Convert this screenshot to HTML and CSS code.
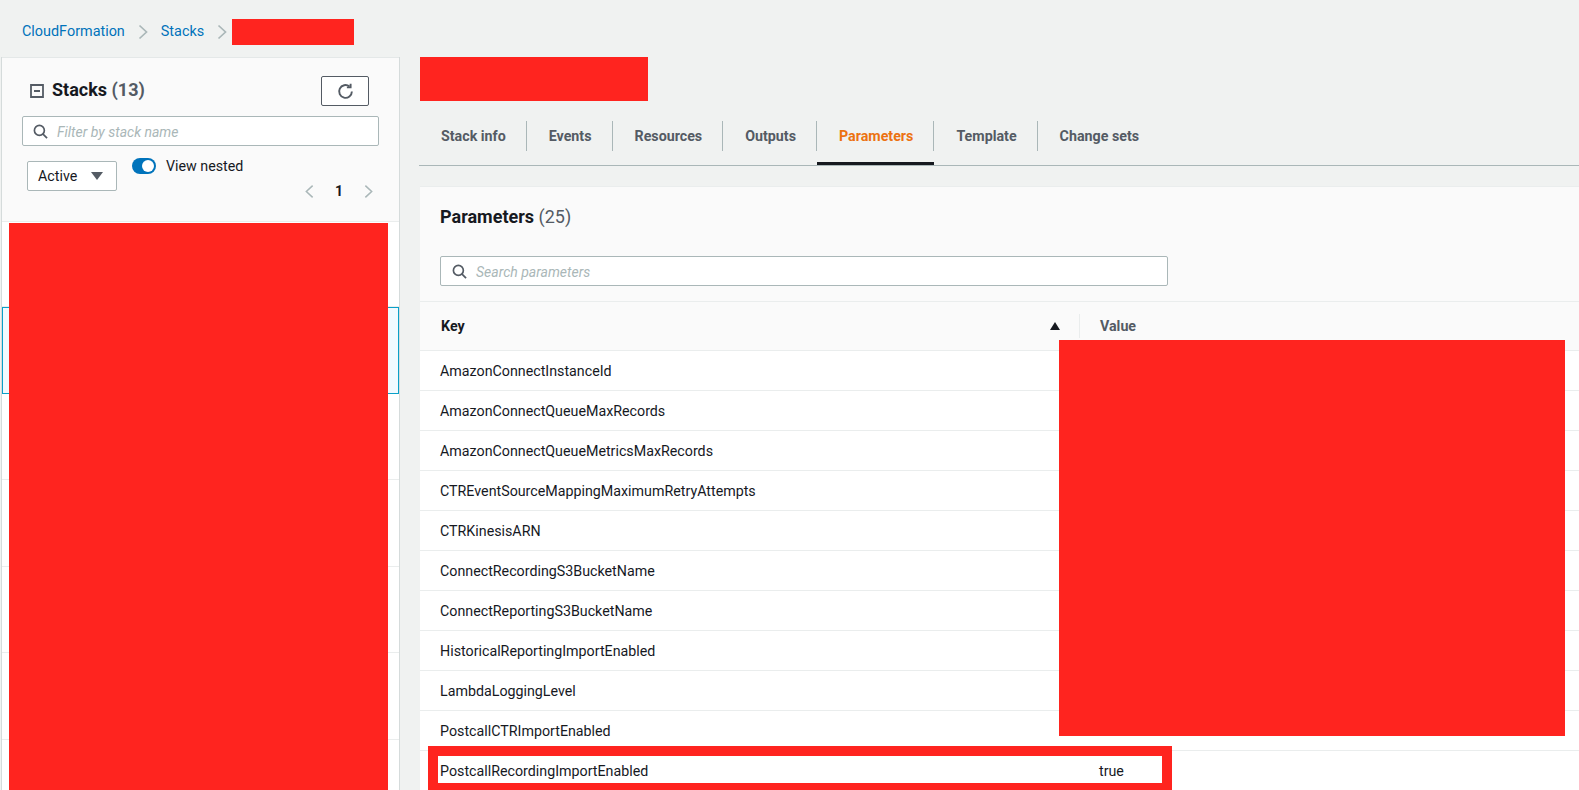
FILE: index.html
```html
<!DOCTYPE html>
<html lang="en">
<head>
<meta charset="utf-8">
<title>CloudFormation Stacks</title>
<link rel="stylesheet" href="styles.css">
</head>
<body>
<div class="page">
  <nav class="crumbs">
    <a class="crumb-link">CloudFormation</a>
    <svg class="crumb-sep" viewBox="0 0 10 16"><path d="M1.500 1.500 8.500 8l-7 6.500"/></svg>
    <a class="crumb-link">Stacks</a>
    <svg class="crumb-sep" viewBox="0 0 10 16"><path d="M1.500 1.500 8.500 8l-7 6.500"/></svg>
    <span class="redact redact-crumb"></span>
  </nav>
  <div class="columns">
    <aside class="stacks">
      <div class="stacks-head">
        <div class="stacks-title-row">
          <svg class="collapse" viewBox="0 0 14 14"><path d="M1 1h12v12H1zM4 7h6"/></svg>
          <h2 class="stacks-title">Stacks <span class="count">(13)</span></h2>
          <button class="refresh">
            <svg viewBox="0 0 16 16"><path d="M14 8A6 6 0 1 1 11.800 3.300"/><path d="M12.800 .6v3.500H9.300"/></svg>
          </button>
        </div>
        <div class="input stacks-filter">
          <svg class="search-ico" viewBox="0 0 16 16"><circle cx="6.800" cy="6.800" r="5.300"/><path d="m10.700 10.700 4.300 4.300"/></svg>
          <span class="placeholder">Filter by stack name</span>
        </div>
        <div class="stacks-controls">
          <div class="select">Active<span class="select-caret"></span></div>
          <div class="toggle-wrap">
            <span class="toggle"><span class="toggle-knob"></span></span>
            <span class="toggle-label">View nested</span>
          </div>
          <div class="pager">
            <svg class="pager-arrow" viewBox="0 0 10 16"><path d="M8.500 1.500 1.500 8l7 6.500"/></svg>
            <span class="pager-num">1</span>
            <svg class="pager-arrow" viewBox="0 0 10 16"><path d="M1.500 1.500 8.500 8l-7 6.500"/></svg>
          </div>
        </div>
      </div>
      <ul class="stack-list">
        <li class="stack-row"></li>
        <li class="stack-row selected"></li>
        <li class="stack-row"></li>
        <li class="stack-row"></li>
        <li class="stack-row"></li>
        <li class="stack-row"></li>
      </ul>
      <span class="redact redact-list"></span>
    </aside>
    <main class="detail">
      <div class="detail-title"><span class="redact redact-title"></span></div>
      <div class="tabs">
        <a class="tab"><span class="tab-label">Stack info</span></a>
        <a class="tab"><span class="tab-label">Events</span></a>
        <a class="tab"><span class="tab-label">Resources</span></a>
        <a class="tab"><span class="tab-label">Outputs</span></a>
        <a class="tab active"><span class="tab-label">Parameters</span></a>
        <a class="tab"><span class="tab-label">Template</span></a>
        <a class="tab"><span class="tab-label last">Change sets</span></a>
      </div>
      <section class="params">
        <div class="params-head">
          <h2 class="params-title">Parameters <span class="params-count">(25)</span></h2>
          <div class="input params-search">
            <svg class="search-ico" viewBox="0 0 16 16"><circle cx="6.800" cy="6.800" r="5.300"/><path d="m10.700 10.700 4.300 4.300"/></svg>
            <span class="placeholder">Search parameters</span>
          </div>
        </div>
        <div class="table-head">
          <div class="th-key">Key<span class="sort-up"></span></div>
          <div class="th-value">Value</div>
        </div>
        <div class="row"><div class="cell-key">AmazonConnectInstanceId</div></div>
        <div class="row"><div class="cell-key">AmazonConnectQueueMaxRecords</div></div>
        <div class="row"><div class="cell-key">AmazonConnectQueueMetricsMaxRecords</div></div>
        <div class="row"><div class="cell-key">CTREventSourceMappingMaximumRetryAttempts</div></div>
        <div class="row"><div class="cell-key">CTRKinesisARN</div></div>
        <div class="row"><div class="cell-key">ConnectRecordingS3BucketName</div></div>
        <div class="row"><div class="cell-key">ConnectReportingS3BucketName</div></div>
        <div class="row"><div class="cell-key">HistoricalReportingImportEnabled</div></div>
        <div class="row"><div class="cell-key">LambdaLoggingLevel</div></div>
        <div class="row"><div class="cell-key">PostcallCTRImportEnabled</div></div>
        <div class="row"><div class="cell-key">PostcallRecordingImportEnabled</div><div class="cell-value">true</div></div>
      </section>
    </main>
  </div>
  <span class="redact redact-values"></span>
  <div class="highlight"></div>
</div>
</body>
</html>
```
FILE: styles.css
```css
* { box-sizing: border-box; }
html, body { margin: 0; height: 100%; overflow: hidden; }
body {
  background: #f0f2f1;
  color: #16191f;
  font-family: Roboto, "Noto Sans", "Liberation Sans", sans-serif;
  font-size: 14.25px;
}
.page { position: relative; width: 1579px; height: 790px; overflow: hidden; }
.redact { position: absolute; background: #ff241f; display: block; }

.crumbs { height: 57px; display: flex; align-items: center; padding: 7px 0 0 22px; line-height: 20px; }
.crumb-link { color: #0073bb; font-size: 14.4px; }
.crumb-sep { width: 10px; height: 16px; margin: 0 13px; fill: none; stroke: #aab7b8; stroke-width: 1.700; }
.redact-crumb { left: 232px; top: 19px; width: 122px; height: 26px; }

.columns { display: flex; align-items: flex-start; padding-left: 1px; }

.stacks { position: relative; width: 399px; height: 733px; flex: none; border: 1px solid #d5dbdb; border-width: 0 1px; }
.stacks-head { height: 165px; background: #fafafa; border-top: 1px solid #e4e8e8; border-bottom: 1px solid #eaeded; padding: 18px 20px 0 20px; }
.stacks-title-row { display: flex; align-items: center; height: 30px; padding-left: 8px; }
.collapse { width: 14px; height: 14px; fill: none; stroke: #545b64; stroke-width: 1.800; margin-right: 8px; }
.stacks-title { margin: 0; font-size: 18px; font-weight: 700; line-height: 24px; position: relative; top: -1px; }
.count { color: #545b64; }
.refresh { margin-left: auto; width: 48px; height: 30px; background: #fff; border: 1px solid #545b64; border-radius: 2px; padding: 0; display: flex; align-items: center; justify-content: center; margin-right: 10px; }
.refresh svg { width: 17px; height: 17px; fill: none; stroke: #545b64; stroke-width: 1.800; }

.input { display: flex; align-items: center; background: #fff; border: 1px solid #aab7b8; border-radius: 2px; }
.search-ico { width: 15px; height: 15px; flex: none; fill: none; stroke: #545b64; stroke-width: 1.800; }
.placeholder { color: #aab7b8; font-style: italic; font-size: 14px; padding-top: 2px; }
.stacks-filter { height: 30px; margin-top: 10px; padding-left: 10px; }
.stacks-filter .search-ico { margin-right: 9px; }

.stacks-controls { position: relative; display: flex; align-items: flex-start; margin-top: 12px; height: 60px; padding-left: 5px; }
.select { width: 90px; height: 30px; margin-top: 3px; background: #fff; border: 1px solid #aab7b8; border-radius: 2px; display: flex; align-items: center; padding: 0 13px 0 10px; justify-content: space-between; }
.select-caret { width: 0; height: 0; border: 6px solid transparent; border-top: 8px solid #545b64; border-bottom: 0; }
.toggle-wrap { display: flex; align-items: center; margin-left: 15px; height: 16px; }
.toggle { width: 24px; height: 16px; border-radius: 8px; background: #0073bb; display: block; position: relative; }
.toggle-knob { position: absolute; top: 2px; right: 2px; width: 12px; height: 12px; border-radius: 50%; background: #fff; }
.toggle-label { margin-left: 10px; }
.pager { position: absolute; left: 283px; top: 25px; display: flex; align-items: center; }
.pager-arrow { width: 9px; height: 15px; fill: none; stroke: #aab7b8; stroke-width: 1.700; }
.pager-num { width: 50px; text-align: center; font-weight: 700; font-size: 14px; }

.stack-list { list-style: none; margin: 0; padding: 0; background: #fff; height: 568px; overflow: hidden; }
.stack-row { height: 86.500px; border-bottom: 1px solid #eaeded; }
.stack-row:first-child { height: 85px; }
.stack-row.selected { background: #f1faff; border: 1px solid #0aa0c8; }
.redact-list { left: 7px; top: 166px; width: 379px; height: 570px; }

.detail { flex: none; width: 1160px; margin-left: 19px; }
.detail-title { height: 64px; position: relative; }
.redact-title { left: 1px; top: 0; width: 228px; height: 44px; }

.tabs { display: flex; border-bottom: 1px solid #aab7b8; height: 45px; }
.tab { height: 44px; border-bottom: 3px solid transparent; color: #545b64; font-weight: 700; font-size: 14.25px; }
.tab-label { display: block; height: 30px; line-height: 31px; padding: 0 20px 0 22px; border-right: 1px solid #aab7b8; }
.tab-label.last { border-right: 0; }
.tab.active { border-bottom-color: #16191f; color: #ec7211; }

.params { margin-top: 20px; margin-left: 1px; background: #fff; border-top: 1px solid #eaeded; height: 604px; }
.params-head { height: 115px; background: #fafafa; padding: 17px 0 0 20px; border-bottom: 1px solid #eaeded; }
.params-title { margin: 0; font-size: 18px; line-height: 26px; font-weight: 700; }
.params-count { color: #545b64; font-weight: 400; }
.params-search { width: 728px; height: 30px; margin-top: 26px; padding-left: 11px; }
.params-search .search-ico { margin-right: 9px; }

.table-head { height: 49px; display: flex; align-items: center; background: #fafafa; border-bottom: 1px solid #eaeded; font-weight: 700; }
.th-key { width: 660px; height: 24px; line-height: 24px; padding-left: 21px; border-right: 1px solid #eaeded; position: relative; }
.sort-up { position: absolute; right: 19px; top: 8px; width: 0; height: 0; border: 5px solid transparent; border-bottom: 8px solid #16191f; border-top: 0; }
.th-value { padding-left: 20px; color: #545b64; }

.row { height: 40px; display: flex; align-items: center; border-bottom: 1px solid #eaeded; }
.cell-key { width: 660px; padding-left: 20px; }
.cell-value { padding-left: 19px; }

.redact-values { left: 1059px; top: 340px; width: 506px; height: 396px; }
.highlight { position: absolute; left: 428px; top: 746px; width: 744px; height: 44px; border: solid #ff241f; border-width: 10px 10px 7px; }
```
